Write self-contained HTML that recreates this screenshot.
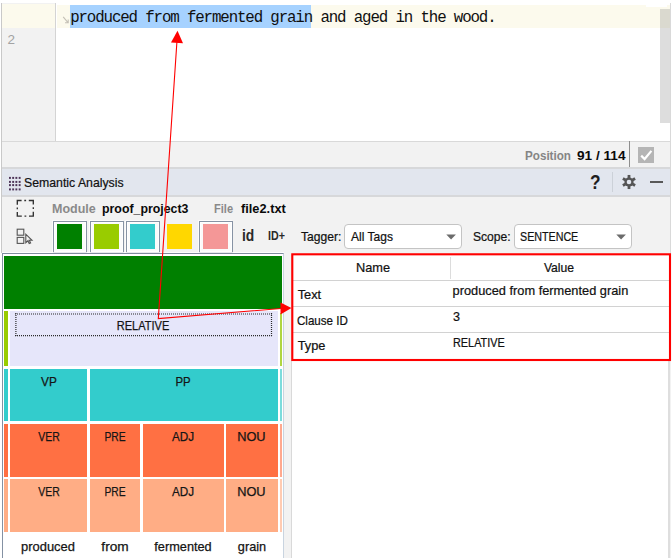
<!DOCTYPE html>
<html><head><meta charset="utf-8">
<style>
*{margin:0;padding:0;box-sizing:border-box}
html,body{width:672px;height:558px;overflow:hidden;background:#fff}
body{position:relative;font-family:"Liberation Sans",sans-serif;font-size:12px;color:#000}
.a{position:absolute}
.t{position:absolute;white-space:nowrap;line-height:1}
.b{font-weight:bold}
.cell{position:absolute}
.lbl{position:absolute;white-space:nowrap;line-height:1;font-size:12.8px;color:#151515;-webkit-text-stroke:0.25px #151515;transform:translateX(-50%)}
.frame{position:absolute;width:34.2px;height:32.4px;top:220.5px;border:1.3px solid #8793a4;background:#fbfbfb;box-shadow:inset 0 0 0 1px #fff,-0.8px -0.8px 0 rgba(255,255,255,.85)}
.sw{position:absolute;width:25px;height:24.9px;top:223.7px}
.combo{position:absolute;top:223.6px;height:25.3px;background:#fff;border:1.3px solid #c4c4c4;border-radius:4px}
</style></head><body>

<!-- ============ EDITOR ============ -->
<div class="a" style="left:1px;top:3px;width:1px;height:250px;background:#c9c9c9"></div>
<div class="a" style="left:2px;top:3px;width:53px;height:138px;background:#f2f2f2"></div>
<div class="a" style="left:55px;top:3px;width:1px;height:138px;background:#d4d4d4"></div>
<div class="a" style="left:2px;top:3.5px;width:53px;height:24px;background:#fcfaed"></div>
<div class="a" style="left:57px;top:5px;width:614px;height:22.6px;background:#fcfaed"></div>
<div class="a" style="left:646px;top:5px;width:21px;height:2px;background:#fff"></div>
<div class="a" style="left:69.8px;top:5px;width:241.7px;height:22.6px;background:#a6d2ff"></div>
<div class="t" id="code" style="left:70.2px;top:10.8px;font-family:'Liberation Mono',monospace;font-size:15.8px;color:#101010;letter-spacing:-1.14px">produced from fermented grain and aged in the wood.</div>
<div class="t" style="left:7.6px;top:33.4px;font-size:13.5px;color:#a3a3a3">2</div>
<svg class="a" style="left:62px;top:15px" width="8" height="10"><path d="M1.2 1.8 L6 7.6 M6.2 4.4 V7.8 H3" stroke="#c4c0b6" stroke-width="1.1" fill="none"/></svg>
<!-- scrollbar -->
<div class="a" style="left:659.7px;top:9px;width:10.3px;height:114px;background:rgba(110,110,110,0.23)"></div>


<!-- ============ STATUS BAR ============ -->
<div class="a" style="left:2px;top:141px;width:670px;height:28px;background:#f2f2f2;border-top:1px solid #d9d9d9"></div>
<div class="t b" id="pos" style="left:524.6px;top:150.1px;font-size:12.8px;color:#858585;transform-origin:0 0;transform:scaleX(0.911)">Position</div>
<div class="t b" id="posn" style="left:577.0px;top:149.9px;font-size:12.8px;color:#0a0a0a;transform-origin:0 0;transform:scaleX(1.064)">91 / 114</div>
<div class="a" style="left:629.3px;top:141px;width:1.2px;height:27px;background:#8e8e8e"></div>
<div class="a" style="left:638px;top:147px;width:16.3px;height:16.2px;background:#b5b5b5"></div>
<svg class="a" style="left:638px;top:147px" width="17" height="17"><path d="M3.2 8.6 L6.6 12 L13.4 3.9" stroke="#fff" stroke-width="2.2" fill="none"/></svg>

<!-- ============ TOOL WINDOW HEADER ============ -->
<div class="a" style="left:2px;top:167.3px;width:670px;height:29.4px;background:#d7d8da"></div>
<div class="a" style="left:2px;top:168.9px;width:670px;height:26px;background:#e2e6ee"></div>
<svg class="a" style="left:8px;top:176px" width="14" height="16"><rect x="1.0" y="0.9" width="1.9" height="2" fill="#4e3458"/><rect x="4.2" y="0.9" width="1.9" height="2" fill="#4e3458"/><rect x="7.4" y="0.9" width="1.9" height="2" fill="#4e3458"/><rect x="10.7" y="0.9" width="1.9" height="2" fill="#4e3458"/><rect x="1.0" y="4.9" width="1.9" height="2" fill="#4e3458"/><rect x="4.2" y="4.9" width="1.9" height="2" fill="#4e3458"/><rect x="7.4" y="4.9" width="1.9" height="2" fill="#4e3458"/><rect x="10.7" y="4.9" width="1.9" height="2" fill="#4e3458"/><rect x="1.0" y="8.1" width="1.9" height="2" fill="#4e3458"/><rect x="4.2" y="8.1" width="1.9" height="2" fill="#4e3458"/><rect x="7.4" y="8.1" width="1.9" height="2" fill="#4e3458"/><rect x="10.7" y="8.1" width="1.9" height="2" fill="#4e3458"/><rect x="1.0" y="12.4" width="1.9" height="2" fill="#4e3458"/><rect x="4.2" y="12.4" width="1.9" height="2" fill="#4e3458"/><rect x="7.4" y="12.4" width="1.9" height="2" fill="#4e3458"/><rect x="10.7" y="12.4" width="1.9" height="2" fill="#4e3458"/></svg>
<div class="t" id="sem" style="left:23.8px;top:176.0px;font-size:13.2px;color:#111;-webkit-text-stroke:0.22px #111;transform-origin:0 0;transform:scaleX(0.931)">Semantic Analysis</div>
<div class="t b" id="qm" style="left:590.2px;top:172.6px;font-size:19.6px;color:#1e1e1e;transform-origin:0 0;transform:scaleX(0.88)">?</div>
<div class="a" style="left:611.8px;top:171.7px;width:1px;height:20px;background:#ccd1d8"></div>
<svg class="a" style="left:621.3px;top:173.8px" width="16" height="16" viewBox="-7.5 -7.5 15 15">
 <g fill="#555"><circle r="4.3"/>
 <g id="teeth"><rect x="-1.3" y="-6.6" width="2.6" height="13.2"/><rect x="-1.3" y="-6.6" width="2.6" height="13.2" transform="rotate(60)"/><rect x="-1.3" y="-6.6" width="2.6" height="13.2" transform="rotate(120)"/></g></g>
 <circle r="2.15" fill="#e2e6ee"/></svg>
<div class="a" style="left:650px;top:181px;width:12.7px;height:2px;background:#585858"></div>

<!-- ============ TOOLBAR ============ -->
<div class="a" style="left:2px;top:196.7px;width:670px;height:361.3px;background:#f2f2f2"></div>
<svg class="a" style="left:16px;top:199px" width="19" height="19"><rect x="1.3" y="1.5" width="16" height="15.6" fill="none" stroke="#303030" stroke-width="1.35" stroke-dasharray="8.6 2.7 1.8 2.7" stroke-dashoffset="4.3"/></svg>
<div class="t b" id="mod" style="left:52.2px;top:203.4px;font-size:12.8px;color:#8a8a8a;transform-origin:0 0;transform:scaleX(0.977)">Module</div>
<div class="t b" id="proj" style="left:101.8px;top:203.4px;font-size:12.8px;color:#0a0a0a;transform-origin:0 0;transform:scaleX(0.965)">proof_project3</div>
<div class="t b" id="fil" style="left:214.0px;top:203.4px;font-size:12.8px;color:#8a8a8a;transform-origin:0 0;transform:scaleX(0.863)">File</div>
<div class="t b" id="fname" style="left:241.0px;top:203.4px;font-size:12.8px;color:#0a0a0a;transform-origin:0 0;transform:scaleX(1.0)">file2.txt</div>
<svg class="a" style="left:16px;top:227.5px" width="18" height="17"><g fill="none" stroke="#555" stroke-width="1.1"><rect x="1.2" y="1.2" width="6.6" height="6"/><rect x="1.2" y="9.4" width="6.6" height="6"/><path d="M9.8 6.2 V14.8 L11.9 12.8 L13.2 15.6 L14.6 15 L13.3 12.3 H16 Z"/></g></svg>

<div class="frame" style="left:53.1px"></div><div class="sw" style="left:57.4px;background:#008000"></div>
<div class="frame" style="left:89.7px"></div><div class="sw" style="left:94px;background:#99cc00"></div>
<div class="frame" style="left:126.2px"></div><div class="sw" style="left:130.4px;background:#33cccc"></div>
<div class="sw" style="left:167px;background:#ffd700"></div>
<div class="frame" style="left:199px"></div><div class="sw" style="left:203.2px;background:#f49797"></div>
<div class="t b" id="idt" style="left:241.8px;top:227.3px;font-size:17px;color:#2a2a2a;transform-origin:0 0;transform:scaleX(0.815)">id</div>
<div class="t b" id="idp" style="left:268.4px;top:230.4px;font-size:12.6px;color:#2a2a2a;transform-origin:0 0;transform:scaleX(0.848)">ID+</div>

<div class="t" id="tag" style="left:301.0px;top:230.5px;font-size:12.8px;color:#111;-webkit-text-stroke:0.22px #111;transform-origin:0 0;transform:scaleX(0.945)">Tagger:</div>
<div class="combo" style="left:344.2px;width:118.2px"></div>
<div class="t" id="all" style="left:350.8px;top:230.7px;font-size:12.8px;color:#111;-webkit-text-stroke:0.22px #111;transform-origin:0 0;transform:scaleX(0.94)">All Tags</div>
<svg class="a" style="left:445.6px;top:234px" width="11" height="6"><path d="M0.3 0.4 H9.9 L5.1 5.4 Z" fill="#6b6b6b"/></svg>
<div class="t" id="sco" style="left:473.4px;top:230.5px;font-size:12.8px;color:#111;-webkit-text-stroke:0.22px #111;transform-origin:0 0;transform:scaleX(0.944)">Scope:</div>
<div class="combo" style="left:513.7px;width:118.4px"></div>
<div class="t" id="sen" style="left:519.5px;top:230.5px;font-size:12.8px;color:#111;-webkit-text-stroke:0.22px #111;transform-origin:0 0;transform:scaleX(0.836)">SENTENCE</div>
<svg class="a" style="left:615.6px;top:234px" width="11" height="6"><path d="M0.3 0.4 H9.9 L5.1 5.4 Z" fill="#6b6b6b"/></svg>

<!-- ============ TREE PANEL ============ -->
<div class="a" style="left:2px;top:252.6px;width:281.7px;height:306px;background:#fff;border-left:1.7px solid #8491a3;border-top:1.4px solid #7f8c9e;border-right:1.6px solid #c9d4e0;box-shadow:0 -1px 0 rgba(255,255,255,.8)"></div>
<div class="cell" style="left:4.0px;top:256.0px;width:277.5px;height:52.8px;background:#008000"></div>
<!-- lavender row -->
<div class="cell" style="left:4.0px;top:311.1px;width:4.4px;height:55.1px;background:#99cc00"></div>
<div class="cell" style="left:10.1px;top:310.8px;width:268.2px;height:55.4px;background:#e6e6fa"></div>
<div class="cell" style="left:280.0px;top:312.5px;width:1.7px;height:53.7px;background:#b0d640"></div>
<svg class="a" style="left:0;top:0" width="290" height="340"><g stroke="#2a2a2a" stroke-width="1.2" stroke-dasharray="1 1" fill="none"><path d="M15 314 H272"/><path d="M15 335.7 H272"/><path d="M15.9 313 V336"/><path d="M271.5 313 V336"/></g></svg>
<!-- cyan row -->
<div class="cell" style="left:4.0px;top:368.5px;width:4.4px;height:52.9px;background:#33cccc"></div>
<div class="cell" style="left:10.1px;top:368.5px;width:77.0px;height:52.9px;background:#33cccc"></div>
<div class="cell" style="left:90.0px;top:368.5px;width:188.0px;height:52.9px;background:#33cccc"></div>
<div class="cell" style="left:280.1px;top:368.5px;width:1.8px;height:52.9px;background:#7cdcdc"></div>
<!-- tomato row -->
<div class="cell" style="left:4.0px;top:423.7px;width:4.4px;height:52.9px;background:#ff7043"></div>
<div class="cell" style="left:10.1px;top:423.7px;width:77.0px;height:52.9px;background:#ff7043"></div>
<div class="cell" style="left:90.0px;top:423.7px;width:50.4px;height:52.9px;background:#ff7043"></div>
<div class="cell" style="left:143.1px;top:423.7px;width:80.8px;height:52.9px;background:#ff7043"></div>
<div class="cell" style="left:226.2px;top:423.7px;width:51.8px;height:52.9px;background:#ff7043"></div>
<div class="cell" style="left:280.1px;top:423.7px;width:1.8px;height:52.9px;background:#ffa88e"></div>
<!-- salmon row -->
<div class="cell" style="left:4.0px;top:479.1px;width:4.4px;height:52.5px;background:#ffad85"></div>
<div class="cell" style="left:10.1px;top:479.1px;width:77.0px;height:52.5px;background:#ffad85"></div>
<div class="cell" style="left:90.0px;top:479.1px;width:50.4px;height:52.5px;background:#ffad85"></div>
<div class="cell" style="left:143.1px;top:479.1px;width:80.8px;height:52.5px;background:#ffad85"></div>
<div class="cell" style="left:226.2px;top:479.1px;width:51.8px;height:52.5px;background:#ffad85"></div>
<div class="cell" style="left:280.1px;top:479.1px;width:1.8px;height:52.5px;background:#ffcbb2"></div>
<div class="lbl" id="rel" style="left:143.2px;top:319.9px;transform-origin:50% 0;transform:translateX(-50%) scaleX(0.862)">RELATIVE</div>
<div class="lbl" id="vp" style="left:49.0px;top:376.1px;transform-origin:50% 0;transform:translateX(-50%) scaleX(0.923)">VP</div>
<div class="lbl" id="pp" style="left:183.4px;top:375.9px;transform-origin:50% 0;transform:translateX(-50%) scaleX(0.89)">PP</div>
<div class="lbl" id="ver1" style="left:48.8px;top:431.2px;transform-origin:50% 0;transform:translateX(-50%) scaleX(0.816)">VER</div>
<div class="lbl" id="pre1" style="left:114.7px;top:431.2px;transform-origin:50% 0;transform:translateX(-50%) scaleX(0.804)">PRE</div>
<div class="lbl" id="adj1" style="left:182.9px;top:431.2px;transform-origin:50% 0;transform:translateX(-50%) scaleX(0.916)">ADJ</div>
<div class="lbl" id="nou1" style="left:251.4px;top:431.3px;transform-origin:50% 0;transform:translateX(-50%) scaleX(1.0)">NOU</div>
<div class="lbl" id="ver2" style="left:48.8px;top:486.2px;transform-origin:50% 0;transform:translateX(-50%) scaleX(0.816)">VER</div>
<div class="lbl" id="pre2" style="left:114.7px;top:486.2px;transform-origin:50% 0;transform:translateX(-50%) scaleX(0.804)">PRE</div>
<div class="lbl" id="adj2" style="left:182.9px;top:486.2px;transform-origin:50% 0;transform:translateX(-50%) scaleX(0.916)">ADJ</div>
<div class="lbl" id="nou2" style="left:251.4px;top:486.2px;transform-origin:50% 0;transform:translateX(-50%) scaleX(1.0)">NOU</div>
<!-- words -->
<div class="lbl" id="w1" style="left:48.2px;top:541.0px;transform-origin:50% 0;transform:translateX(-50%) scaleX(1.01)">produced</div>
<div class="lbl" id="w2" style="left:115.2px;top:541.0px;transform-origin:50% 0;transform:translateX(-50%) scaleX(1.067)">from</div>
<div class="lbl" id="w3" style="left:182.5px;top:541.0px;transform-origin:50% 0;transform:translateX(-50%) scaleX(0.996)">fermented</div>
<div class="lbl" id="w4" style="left:251.5px;top:541.2px;transform-origin:50% 0;transform:translateX(-50%) scaleX(0.994)">grain</div>

<!-- ============ PROPERTIES PANEL ============ -->
<div class="a" style="left:291.3px;top:254px;width:379px;height:304px;background:#fff;border-left:1px solid #d9d9d9"></div>


<div class="a" style="left:293px;top:280.2px;width:376px;height:1px;background:#d2d2d2"></div>
<div class="a" style="left:293px;top:306px;width:376px;height:1px;background:#d2d2d2"></div>
<div class="a" style="left:293px;top:331.9px;width:376px;height:1px;background:#d2d2d2"></div>
<div class="a" style="left:450.3px;top:257px;width:1px;height:21.6px;background:#dcdcdc"></div>
<div class="t" id="nm" style="left:372.5px;top:262.4px;font-size:12.8px;color:#111;-webkit-text-stroke:0.22px #111;transform-origin:50% 0;transform:translateX(-50%) scaleX(0.998)">Name</div>
<div class="t" id="vl" style="left:559.4px;top:262.4px;font-size:12.8px;color:#111;-webkit-text-stroke:0.22px #111;transform-origin:50% 0;transform:translateX(-50%) scaleX(0.95)">Value</div>
<div class="t" id="r1" style="left:297.7px;top:288.6px;font-size:12.8px;color:#111;-webkit-text-stroke:0.22px #111;transform-origin:0 0;transform:scaleX(1.0)">Text</div>
<div class="t" id="r2" style="left:297.2px;top:315.1px;font-size:12.8px;color:#111;-webkit-text-stroke:0.22px #111;transform-origin:0 0;transform:scaleX(0.904)">Clause ID</div>
<div class="t" id="r3" style="left:297.7px;top:340.2px;font-size:12.8px;color:#111;-webkit-text-stroke:0.22px #111;transform-origin:0 0;transform:scaleX(1.0)">Type</div>
<div class="t" id="v1" style="left:452.6px;top:284.6px;font-size:12.8px;color:#111;-webkit-text-stroke:0.22px #111;transform-origin:0 0;transform:scaleX(1.0)">produced from fermented grain</div>
<div class="t" id="v2" style="left:453.0px;top:310.9px;font-size:12.8px;color:#111;-webkit-text-stroke:0.22px #111;transform-origin:0 0;transform:scaleX(0.983)">3</div>
<div class="t" id="v3" style="left:452.6px;top:336.7px;font-size:12.8px;color:#111;-webkit-text-stroke:0.22px #111;transform-origin:0 0;transform:scaleX(0.849)">RELATIVE</div>

<div class="a" style="left:669.8px;top:3px;width:0.9px;height:358px;background:#d9d9d9"></div>
<div class="a" style="left:668.3px;top:361px;width:2.2px;height:197px;background:#dedede"></div>
<div class="a" style="left:670.7px;top:0;width:1.3px;height:558px;background:#fff"></div>
<!-- ============ RED ANNOTATIONS ============ -->
<svg id="anno" class="a" style="left:0;top:0" width="672" height="558">
 <rect x="292.3" y="254.3" width="377.7" height="105.7" fill="none" stroke="#ff0000" stroke-width="2.1"/>
 <path d="M176.9 42 L158.3 318.6 L281 308.5" fill="none" stroke="#ff0000" stroke-width="1.1"/>
 <path d="M177.5 30.8 L171 42.4 L183 43.3 Z" fill="#ff0000"/>
 <path d="M291.4 308.1 L280.5 302.5 L280.5 314.5 Z" fill="#ff0000"/>
</svg>


</body></html>
